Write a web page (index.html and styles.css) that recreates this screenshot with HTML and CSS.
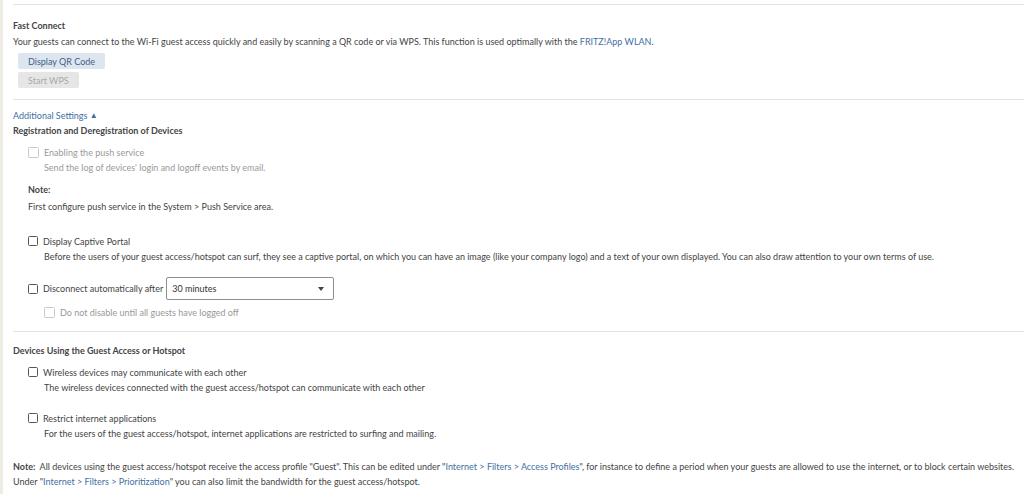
FILE: index.html
```html
<!DOCTYPE html>
<html lang="en">
<head>
    <meta charset="UTF-8">
    <meta name="viewport" content="width=device-width, initial-scale=1.0">
    <title>Guest Access</title>
    <link rel="stylesheet" href="styles.css">
</head>
<body>
<div class="page">
    <div class="section first">
        <h3>Fast Connect</h3>
        <p class="text">Your guests can connect to the Wi-Fi guest access quickly and easily by scanning a QR code or via WPS. This function is used optimally with the <a href="#">FRITZ!App WLAN</a>.</p>
        <div class="buttons">
            <button class="btn">Display QR Code</button>
            <button class="btn" disabled>Start WPS</button>
        </div>
    </div>

    <div class="section">
        <a href="#" class="toggle">Additional Settings <span class="arrow">&#9650;</span></a>
        <h3 class="sub">Registration and Deregistration of Devices</h3>

        <div class="option disabled">
            <label><span class="box"></span>Enabling the push service</label>
            <p class="desc">Send the log of devices' login and logoff events by email.</p>
        </div>
        <div class="note">
            <p class="note-title">Note:</p>
            <p>First configure push service in the System &gt; Push Service area.</p>
        </div>

        <div class="option captive">
            <label><span class="box"></span>Display Captive Portal</label>
            <p class="desc">Before the users of your guest access/hotspot can surf, they see a captive portal, on which you can have an image (like your company logo) and a text of your own displayed. You can also draw attention to your own terms of use.</p>
        </div>

        <div class="option disconnect">
            <label><span class="box"></span>Disconnect automatically after</label>
            <div class="select">30 minutes<span class="caret"></span></div>
        </div>
        <div class="option disabled nested">
            <label><span class="box"></span>Do not disable until all guests have logged off</label>
        </div>
    </div>

    <div class="section">
        <h3 class="devices">Devices Using the Guest Access or Hotspot</h3>
        <div class="option">
            <label><span class="box"></span>Wireless devices may communicate with each other</label>
            <p class="desc">The wireless devices connected with the guest access/hotspot can communicate with each other</p>
        </div>
        <div class="option restrict">
            <label><span class="box"></span>Restrict internet applications</label>
            <p class="desc">For the users of the guest access/hotspot, internet applications are restricted to surfing and mailing.</p>
        </div>
    </div>

    <div class="footnote">
        <p><b>Note:</b>&nbsp; All devices using the guest access/hotspot receive the access profile "Guest". This can be edited under "<a href="#">Internet &gt; Filters &gt; Access Profiles</a>", for instance to define a period when your guests are allowed to use the internet, or to block certain websites.</p>
        <p>Under "<a href="#">Internet &gt; Filters &gt; Prioritization</a>" you can also limit the bandwidth for the guest access/hotspot.</p>
    </div>
</div>
</body>
</html>
```

FILE: styles.css
```css
body {
    margin: 0;
    font-family: Lato, "Liberation Sans", sans-serif;
    font-size: 9px;
    color: #444;
    background: #fff;
}
p {
    margin: 0;
}
a {
    color: #3f6f9f;
    text-decoration: none;
}
.page {
    border-left: 3px solid #eeebe3;
    min-height: 494px;
    box-sizing: border-box;
    padding-top: 4px;
}
.section {
    margin-left: 10px;
    border-top: 1px solid #e2e2e2;
    padding: 10px 0 9px;
    line-height: 11px;
}
.section.first {
    padding: 15px 0 11px;
}
h3 {
    font-size: 9px;
    font-weight: bold;
    margin: 0 0 5px;
    color: #444;
}
.text {
    line-height: 12px;
}
.buttons {
    display: flex;
    flex-direction: column;
    align-items: flex-start;
    gap: 3px;
    margin: 5px 0 0 5px;
}
.btn {
    font-family: inherit;
    font-size: 9px;
    border: none;
    border-radius: 2px;
    background: #dde6ee;
    color: #3e5f8a;
    padding: 0 10px;
    height: 16px;
}
.btn:disabled {
    background: #e6e6e6;
    color: #a9a9a9;
}
.toggle {
    display: inline-block;
}
.arrow {
    font-size: 8px;
    vertical-align: 1px;
}
h3.sub {
    margin: 4px 0 10px;
}
.option {
    margin-left: 15px;
}
.option label {
    display: flex;
    align-items: center;
    height: 12px;
}
.box {
    width: 8px;
    height: 8px;
    border: 1.5px solid #555;
    border-radius: 1.5px;
    margin-right: 5px;
    flex: none;
}
.option.disabled {
    color: #999;
}
.option.disabled .box {
    border: 1px solid #c9c9c9;
    width: 9px;
    height: 9px;
}
.desc {
    margin: 4px 0 0 16px;
    line-height: 12px;
}
.option.disabled .desc {
    color: #999;
}
.note {
    margin: 10px 0 0 15px;
    line-height: 12px;
}
.note-title {
    font-weight: bold;
    margin-bottom: 5px;
}
.captive {
    margin-top: 22px;
}
.disconnect {
    display: flex;
    align-items: center;
    margin-top: 14px;
}
.disconnect label {
    margin-right: 3px;
}
.select {
    width: 168px;
    height: 23px;
    border: 1px solid #8e8e8e;
    border-radius: 2px;
    box-sizing: border-box;
    padding: 0 5px;
    display: flex;
    align-items: center;
    justify-content: space-between;
    color: #333;
}
.caret {
    width: 0;
    height: 0;
    border-left: 3.5px solid transparent;
    border-right: 3.5px solid transparent;
    border-top: 4px solid #444;
    margin-right: 4px;
}
.nested {
    margin: 6px 0 4px 31px;
}
.devices {
    margin: 3px 0 10px;
}
.restrict {
    margin-top: 18px;
}
.footnote {
    margin-left: 10px;
    margin-top: 10px;
    line-height: 15px;
    padding-bottom: 5px;
    border-bottom: 4px solid #efefef;
    white-space: nowrap;
}
.footnote b {
    font-weight: bold;
}
```
